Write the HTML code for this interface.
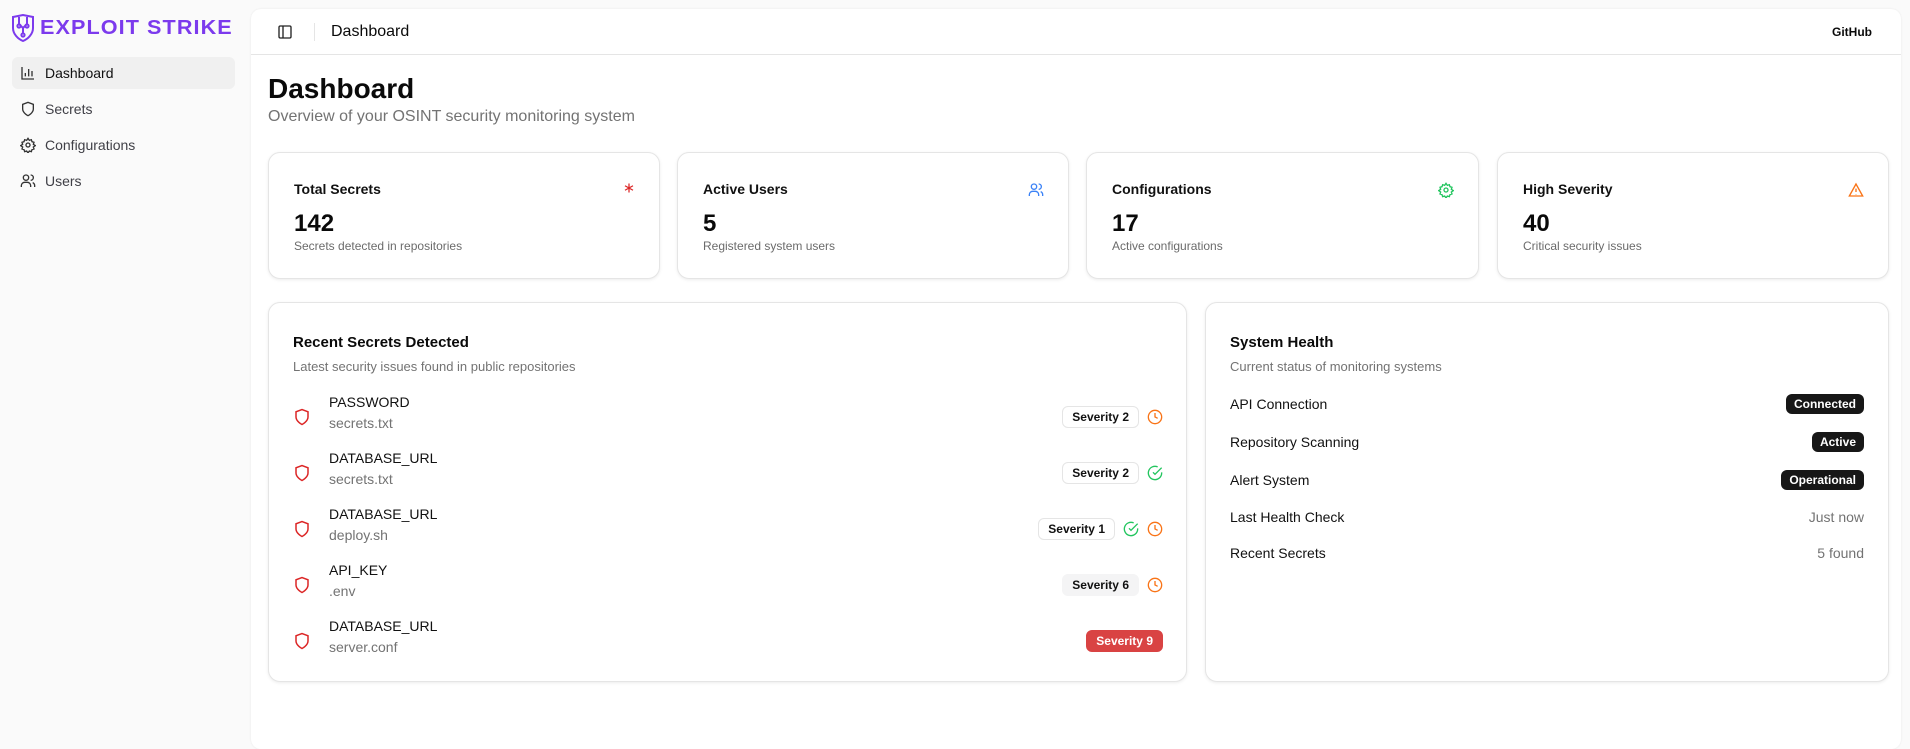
<!DOCTYPE html>
<html><head><meta charset="utf-8"><style>
*{box-sizing:border-box;margin:0;padding:0}
body{width:1910px;height:740px;background:#fafafa;font-family:"Liberation Sans",sans-serif;color:#0a0a0a;position:relative;overflow:hidden}
.abs{position:absolute}
.logo{left:10px;top:14px;display:flex;align-items:center}
.logo span{font-weight:bold;font-size:20px;color:#7c3aed;letter-spacing:1px;display:inline-block;transform:scaleX(1.08);transform-origin:left;margin-left:4px}
.nav{left:12px;width:223px;height:32px;border-radius:6px;display:flex;align-items:center;padding-left:8px;font-size:14px;color:#3f3f46}
.nav svg{margin-right:9px}
.main{left:251px;top:9px;width:1650px;height:740px;background:#fff;border-radius:10px;box-shadow:0 0 2px rgba(0,0,0,.08)}
.hdr{position:absolute;left:0;top:0;width:100%;height:46px;border-bottom:1px solid #e5e5e5}
.card{position:absolute;background:#fff;border:1px solid #e5e5e5;border-radius:12px;box-shadow:0 1px 3px rgba(0,0,0,.08)}
.st .t{position:absolute;left:25px;top:28px;font-size:14px;font-weight:bold;color:#111}
.st .v{position:absolute;left:25px;top:57px;font-size:24px;font-weight:bold}
.st .d{position:absolute;left:25px;top:86px;font-size:12px;color:#6b6b6b}
.st svg{position:absolute;right:24px;top:29px}
.item{position:absolute;left:24px;width:870px;height:48px}
.item .n{position:absolute;left:36px;top:0;font-size:14px;color:#111}
.item .f{position:absolute;left:36px;top:21px;font-size:14px;color:#737373}
.item .sh{position:absolute;left:0;top:14px}
.item .r{position:absolute;right:0;top:12px;display:flex;align-items:center;gap:8px}
.bdg{border:1px solid #e5e5e5;border-radius:6px;font-size:12px;font-weight:bold;padding:3px 9px;color:#111}
.row{position:absolute;left:24px;right:24px;font-size:14px;color:#111;display:flex;justify-content:space-between;align-items:center;height:22px}
.dk{background:#171717;color:#fff;font-size:12px;font-weight:bold;padding:3px 8px;border-radius:6px}
.mut{color:#737373}
</style></head><body>
<div class="abs logo">
<svg width="26" height="28" viewBox="0 0 26 28" fill="none" stroke="#7c3aed" stroke-width="2"><path d="M3 3 L13 1 L23 3 L23 14 C23 20 18 25 13 27 C8 25 3 20 3 14 Z"/><path d="M9 3 V10 L13 14 V20 M17 3 V10 L13 14"/><circle cx="9" cy="12" r="1.6"/><circle cx="17" cy="12" r="1.6"/><circle cx="13" cy="21" r="1.6"/></svg>
<span>EXPLOIT STRIKE</span></div>

<div class="abs nav" style="top:57px;background:#f0f0f0;color:#111">
<svg width="16" height="16" viewBox="0 0 24 24" fill="none" stroke="#333" stroke-width="2"><path d="M3 3v18h18M8 17v-5M13 17V6M18 17v-8"/></svg>Dashboard</div>
<div class="abs nav" style="top:93px"><svg width="16" height="16" viewBox="0 0 24 24" fill="none" stroke="#333" stroke-width="2"><path d="M12 22s8-4 8-10V5l-8-3-8 3v7c0 6 8 10 8 10z"/></svg>Secrets</div>
<div class="abs nav" style="top:129px"><svg width="16" height="16" viewBox="0 0 24 24" fill="none" stroke="#333" stroke-width="2"><circle cx="12" cy="12" r="3"/><path d="M12 2l2 3 3-1 1 3 3 1-1 3 3 2-3 2 1 3-3 1-1 3-3-1-2 3-2-3-3 1-1-3-3-1 1-3-3-2 3-2-1-3 3-1 1-3 3 1z"/></svg>Configurations</div>
<div class="abs nav" style="top:165px"><svg width="16" height="16" viewBox="0 0 24 24" fill="none" stroke="#333" stroke-width="2"><circle cx="9" cy="7" r="4"/><path d="M2 21v-2a5 5 0 0 1 5-5h4a5 5 0 0 1 5 5v2M16 3a4 4 0 0 1 0 8M22 21v-2a5 5 0 0 0-3-4.6"/></svg>Users</div>

<div class="abs main">
<div class="hdr">
<svg style="position:absolute;left:26px;top:15px" width="16" height="16" viewBox="0 0 24 24" fill="none" stroke="#222" stroke-width="2"><rect x="3" y="3" width="18" height="18" rx="2"/><path d="M9 3v18"/></svg>
<div style="position:absolute;left:63px;top:14px;width:1px;height:18px;background:#e5e5e5"></div>
<div style="position:absolute;left:80px;top:14px;font-size:16px">Dashboard</div>
<div style="position:absolute;left:1581px;top:16px;font-size:12px;font-weight:bold">GitHub</div>
</div>
<div style="position:absolute;left:17px;top:64px;font-size:28px;font-weight:bold">Dashboard</div>
<div style="position:absolute;left:17px;top:99px;font-size:16px;color:#737373">Overview of your OSINT security monitoring system</div>

<div class="card st" style="left:17px;top:143px;width:392px;height:127px"><div class="t">Total Secrets</div><div class="v">142</div><div class="d">Secrets detected in repositories</div><svg width="12" height="12" viewBox="0 0 24 24" stroke="#dc2626" stroke-width="2.5"><path d="M12 3v18M4 7.5l16 9M20 7.5l-16 9"/></svg></div>
<div class="card st" style="left:426px;top:143px;width:392px;height:127px"><div class="t">Active Users</div><div class="v">5</div><div class="d">Registered system users</div><svg width="16" height="16" viewBox="0 0 24 24" fill="none" stroke="#3b82f6" stroke-width="2"><circle cx="9" cy="7" r="4"/><path d="M2 21v-2a5 5 0 0 1 5-5h4a5 5 0 0 1 5 5v2M16 3a4 4 0 0 1 0 8M22 21v-2a5 5 0 0 0-3-4.6"/></svg></div>
<div class="card st" style="left:835px;top:143px;width:393px;height:127px"><div class="t">Configurations</div><div class="v">17</div><div class="d">Active configurations</div><svg width="16" height="16" viewBox="0 0 24 24" fill="none" stroke="#22c55e" stroke-width="2"><circle cx="12" cy="12" r="3"/><path d="M12 2l2 3 3-1 1 3 3 1-1 3 3 2-3 2 1 3-3 1-1 3-3-1-2 3-2-3-3 1-1-3-3-1 1-3-3-2 3-2-1-3 3-1 1-3 3 1z"/></svg></div>
<div class="card st" style="left:1246px;top:143px;width:392px;height:127px"><div class="t">High Severity</div><div class="v">40</div><div class="d">Critical security issues</div><svg width="16" height="16" viewBox="0 0 24 24" fill="none" stroke="#f97316" stroke-width="2"><path d="M12 3L2 21h20L12 3zM12 10v5M12 18v.5"/></svg></div>

<div class="card" style="left:17px;top:293px;width:919px;height:380px">
<div style="position:absolute;left:24px;top:31px;font-size:15px;font-weight:bold">Recent Secrets Detected</div>
<div style="position:absolute;left:24px;top:56px;font-size:13px;color:#737373">Latest security issues found in public repositories</div>
<div class="item" style="top:91px"><svg class="sh" width="18" height="18" viewBox="0 0 24 24" fill="none" stroke="#dc2626" stroke-width="2"><path d="M12 22s8-4 8-10V5l-8-3-8 3v7c0 6 8 10 8 10z"/></svg><div class="n">PASSWORD</div><div class="f">secrets.txt</div><div class="r"><span class="bdg">Severity 2</span><svg width="16" height="16" viewBox="0 0 24 24" fill="none" stroke="#f97316" stroke-width="2"><circle cx="12" cy="12" r="10"/><path d="M12 6v6l4 2"/></svg></div></div>
<div class="item" style="top:147px"><svg class="sh" width="18" height="18" viewBox="0 0 24 24" fill="none" stroke="#dc2626" stroke-width="2"><path d="M12 22s8-4 8-10V5l-8-3-8 3v7c0 6 8 10 8 10z"/></svg><div class="n">DATABASE_URL</div><div class="f">secrets.txt</div><div class="r"><span class="bdg">Severity 2</span><svg width="16" height="16" viewBox="0 0 24 24" fill="none" stroke="#22c55e" stroke-width="2"><path d="M22 11v1a10 10 0 1 1-6-9.2"/><path d="M9 11l3 3L22 4"/></svg></div></div>
<div class="item" style="top:203px"><svg class="sh" width="18" height="18" viewBox="0 0 24 24" fill="none" stroke="#dc2626" stroke-width="2"><path d="M12 22s8-4 8-10V5l-8-3-8 3v7c0 6 8 10 8 10z"/></svg><div class="n">DATABASE_URL</div><div class="f">deploy.sh</div><div class="r"><span class="bdg">Severity 1</span><svg width="16" height="16" viewBox="0 0 24 24" fill="none" stroke="#22c55e" stroke-width="2"><path d="M22 11v1a10 10 0 1 1-6-9.2"/><path d="M9 11l3 3L22 4"/></svg><svg width="16" height="16" viewBox="0 0 24 24" fill="none" stroke="#f97316" stroke-width="2"><circle cx="12" cy="12" r="10"/><path d="M12 6v6l4 2"/></svg></div></div>
<div class="item" style="top:259px"><svg class="sh" width="18" height="18" viewBox="0 0 24 24" fill="none" stroke="#dc2626" stroke-width="2"><path d="M12 22s8-4 8-10V5l-8-3-8 3v7c0 6 8 10 8 10z"/></svg><div class="n">API_KEY</div><div class="f">.env</div><div class="r"><span class="bdg" style="background:#f4f4f5;border-color:#f4f4f5">Severity 6</span><svg width="16" height="16" viewBox="0 0 24 24" fill="none" stroke="#f97316" stroke-width="2"><circle cx="12" cy="12" r="10"/><path d="M12 6v6l4 2"/></svg></div></div>
<div class="item" style="top:315px"><svg class="sh" width="18" height="18" viewBox="0 0 24 24" fill="none" stroke="#dc2626" stroke-width="2"><path d="M12 22s8-4 8-10V5l-8-3-8 3v7c0 6 8 10 8 10z"/></svg><div class="n">DATABASE_URL</div><div class="f">server.conf</div><div class="r"><span class="bdg" style="background:#d94343;border-color:#d94343;color:#fff">Severity 9</span></div></div>
</div>

<div class="card" style="left:954px;top:293px;width:684px;height:380px">
<div style="position:absolute;left:24px;top:31px;font-size:15px;font-weight:bold">System Health</div>
<div style="position:absolute;left:24px;top:56px;font-size:13px;color:#737373">Current status of monitoring systems</div>
<div class="row" style="top:90px"><span>API Connection</span><span class="dk">Connected</span></div>
<div class="row" style="top:128px"><span>Repository Scanning</span><span class="dk">Active</span></div>
<div class="row" style="top:166px"><span>Alert System</span><span class="dk">Operational</span></div>
<div class="row" style="top:203px"><span>Last Health Check</span><span class="mut">Just now</span></div>
<div class="row" style="top:239px"><span>Recent Secrets</span><span class="mut">5 found</span></div>
</div>
</div>
</body></html>
